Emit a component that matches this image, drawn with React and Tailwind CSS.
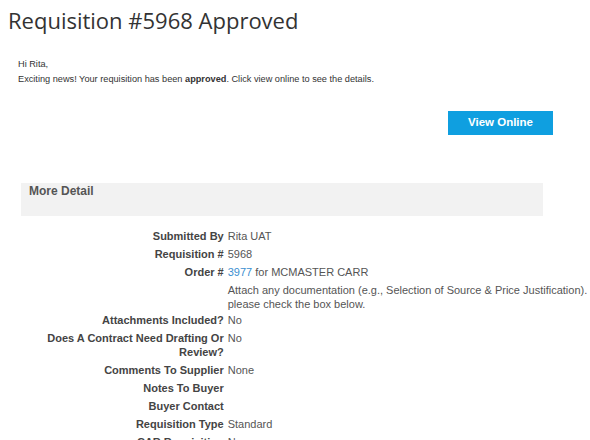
const rows = [
  { label: 'Submitted By', value: 'Rita UAT' },
  { label: 'Requisition #', value: '5968' },
  {
    label: 'Order #',
    value: (
      <>
        <a href="#" className="text-[#3a8fd0]">3977</a> for MCMASTER CARR
      </>
    ),
  },
  {
    label: '',
    value: 'Attach any documentation (e.g., Selection of Source & Price Justification). please check the box below.',
    tight: true,
  },
  { label: 'Attachments Included?', value: 'No' },
  { label: 'Does A Contract Need Drafting Or Review?', value: 'No' },
  { label: 'Comments To Supplier', value: 'None' },
  { label: 'Notes To Buyer', value: '' },
  { label: 'Buyer Contact', value: '' },
  { label: 'Requisition Type', value: 'Standard' },
  { label: 'CAR Requisition', value: 'No' },
];

const App = () => {
  return (
    <div className="w-[590px] h-[440px] overflow-hidden bg-white font-['Liberation_Sans',Arial,sans-serif]">
      <h1 className="pl-[8px] pt-[5px] text-[22px] leading-[30px] text-[#333] font-['Open_Sans',sans-serif]">
        Requisition #5968 Approved
      </h1>

      <div className="pl-[18px] pt-[22px] text-[9.2px] leading-[15px] text-[#333]">
        <p>Hi Rita,</p>
        <p>
          Exciting news! Your requisition has been <span className="font-bold">approved</span>. Click view online to see the details.
        </p>
      </div>

      <div className="flex justify-end pr-[37px] pt-[24px]">
        <a
          href="#"
          className="flex h-[24px] w-[105px] items-center justify-center bg-[#0f9fe0] text-[11.5px] font-bold text-white"
        >
          View Online
        </a>
      </div>

      <div className="ml-[21px] mt-[48px] h-[33px] w-[522px] bg-[#f2f2f2] px-[8px] pt-[1px]">
        <h2 className="text-[12px] leading-[14px] font-bold text-[#555]">More Detail</h2>
      </div>

      <table className="mt-[11px] border-collapse text-[11px] leading-[14px]">
        <tbody>
          {rows.map((row, i) => (
            <tr key={i}>
              <td className={`w-[225px] pl-[44px] pr-[1px] text-right align-top font-bold text-[#444] ${row.tight ? 'pt-[2px] pb-0' : 'py-[2px]'}`}>
                {row.label}
              </td>
              <td className={`w-[366px] pl-[3px] align-top text-[#555] ${row.tight ? 'pt-[2px] pb-0' : 'py-[2px]'}`}>
                {row.value}
              </td>
            </tr>
          ))}
        </tbody>
      </table>
    </div>
  );
};

export default App;
